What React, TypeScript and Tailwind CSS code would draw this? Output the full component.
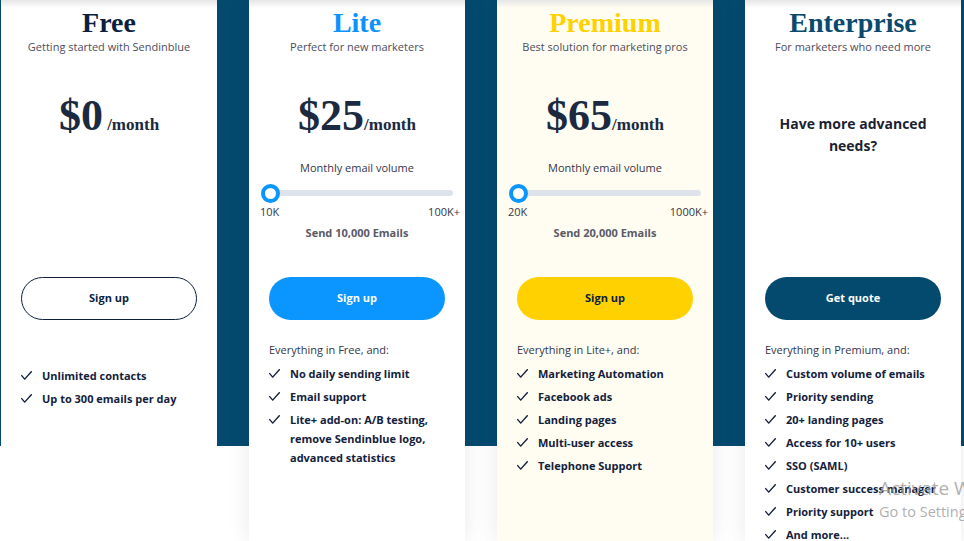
import React from "react";

type Plan = {
  title: string;
  titleColor: string;
  subtitle: string;
  price?: string;
  suffix?: string;
  bg: string;
  shadow: boolean;
  slider?: { min: string; max: string; send: string };
  ask?: boolean;
  button: { label: string; cls: string };
  intro?: string;
  features: string[];
};

const plans: Plan[] = [
  {
    title: "Free",
    titleColor: "text-[#0c1f3f]",
    subtitle: "Getting started with Sendinblue",
    price: "$0",
    suffix: "\u00a0/month",
    bg: "bg-white",
    shadow: false,
    button: {
      label: "Sign up",
      cls: "border border-[#0c1f3f] bg-white text-[#0c1f3f]",
    },
    features: ["Unlimited contacts", "Up to 300 emails per day"],
  },
  {
    title: "Lite",
    titleColor: "text-[#0b92ff]",
    subtitle: "Perfect for new marketers",
    price: "$25",
    suffix: "/month",
    bg: "bg-white",
    shadow: true,
    slider: { min: "10K", max: "100K+", send: "Send 10,000 Emails" },
    button: { label: "Sign up", cls: "bg-[#0b96ff] text-white" },
    intro: "Everything in Free, and:",
    features: [
      "No daily sending limit",
      "Email support",
      "Lite+ add-on: A/B testing, remove Sendinblue logo, advanced statistics",
    ],
  },
  {
    title: "Premium",
    titleColor: "text-[#ffd100]",
    subtitle: "Best solution for marketing pros",
    price: "$65",
    suffix: "/month",
    bg: "bg-[#fffdf1]",
    shadow: true,
    slider: { min: "20K", max: "1000K+", send: "Send 20,000 Emails" },
    button: { label: "Sign up", cls: "bg-[#ffd100] text-[#0c1f3f]" },
    intro: "Everything in Lite+, and:",
    features: [
      "Marketing Automation",
      "Facebook ads",
      "Landing pages",
      "Multi-user access",
      "Telephone Support",
    ],
  },
  {
    title: "Enterprise",
    titleColor: "text-[#0a4a6e]",
    subtitle: "For marketers who need more",
    bg: "bg-white",
    shadow: true,
    ask: true,
    button: { label: "Get quote", cls: "bg-[#044a6f] text-white" },
    intro: "Everything in Premium, and:",
    features: [
      "Custom volume of emails",
      "Priority sending",
      "20+ landing pages",
      "Access for 10+ users",
      "SSO (SAML)",
      "Customer success manager",
      "Priority support",
      "And more...",
    ],
  },
];

function Check() {
  return (
    <svg width="11" height="9" viewBox="0 0 11 9" className="shrink-0 mt-[5px]">
      <path
        d="M0.7 4.6 L3.7 8.1 L10.3 0.7"
        fill="none"
        stroke="#13213c"
        strokeWidth="1.4"
        strokeLinecap="round"
        strokeLinejoin="round"
      />
    </svg>
  );
}

function Card({ p }: { p: Plan }) {
  return (
    <div
      className={`relative w-[216px] shrink-0 h-[541px] ${p.bg} ${
        p.shadow ? "shadow-[0_0_22px_rgba(0,0,0,0.09)]" : ""
      } px-[20px] flex flex-col`}
    >
      <div className="absolute left-0 right-0 top-0 h-[8px] bg-gradient-to-b from-[#e6e6e6] to-transparent" />
      <div className="h-[277px] shrink-0 flex flex-col items-center">
        <div
          className={`pt-[7px] leading-[32px] text-[28px] font-bold ${p.titleColor}`}
          style={{ fontFamily: "'Liberation Serif', serif" }}
        >
          {p.title}
        </div>
        <div className="text-[11px] leading-[16px] text-[#4d4d5c] whitespace-nowrap">
          {p.subtitle}
        </div>
        {p.price && (
          <div
            className="mt-[40px] flex items-baseline font-bold leading-[42px]"
            style={{ fontFamily: "'Liberation Serif', serif" }}
          >
            <span className="text-[44px] text-[#1b2a40]">{p.price}</span>
            <span className="text-[17px] text-[#1b2a40]">{p.suffix}</span>
          </div>
        )}
        {p.ask && (
          <div className="mt-[58px] text-[14px] leading-[22px] font-bold text-[#1c1f33] text-center">
            Have more advanced
            <br />
            needs?
          </div>
        )}
        {p.slider && (
          <div className="w-full flex flex-col">
            <div className="mt-[14px] text-center text-[11px] leading-[16px] text-[#34364a]">
              Monthly email volume
            </div>
            <div className="mt-[7px] ml-[-9px] w-[200px] flex flex-col">
              <div className="relative h-[20px] flex items-center">
                <div className="ml-[1px] w-[192px] h-[6px] rounded-full bg-[#dee3eb]" />
                <div className="absolute left-[1px] top-[0.5px] w-[19px] h-[19px] rounded-full border-[4px] border-[#0b96ff] bg-white" />
              </div>
              <div className="mt-[1px] flex justify-between text-[11px] leading-[16px] text-[#333645]">
                <span>{p.slider.min}</span>
                <span className="whitespace-nowrap">{p.slider.max}</span>
              </div>
            </div>
            <div className="mt-[5px] text-center text-[11px] leading-[16px] font-bold text-[#585a66]">
              {p.slider.send}
            </div>
          </div>
        )}
      </div>
      <div
        className={`h-[43px] shrink-0 rounded-full flex items-center justify-center text-[11px] font-bold ${p.button.cls}`}
      >
        {p.button.label}
      </div>
      <div className="mt-[22px] h-[16px] shrink-0 text-[11px] leading-[16px] text-[#34364a] whitespace-nowrap">
        {p.intro ?? ""}
      </div>
      <div className={`${p.intro ? "mt-[6px]" : "mt-[8px]"} flex flex-col gap-[4px]`}>
        {p.features.map((f) => (
          <div key={f} className="flex items-start gap-[10px]">
            <Check />
            <span className="text-[11px] leading-[19px] font-bold text-[#13213c]">{f}</span>
          </div>
        ))}
      </div>
    </div>
  );
}

export default function App() {
  return (
    <div
      className="relative w-[964px] h-[541px] overflow-hidden bg-[linear-gradient(to_bottom,#044a6f_446px,#ffffff_446px)]"
      style={{ fontFamily: "'Open Sans', sans-serif" }}
    >
      <div className="flex gap-[32px] pl-[1px]">
        {plans.map((p) => (
          <Card key={p.title} p={p} />
        ))}
      </div>
      <div className="absolute left-[879px] top-[475px] pointer-events-none text-[#9a9a9a]/80 whitespace-nowrap">
        <div className="text-[19px] leading-[26px]">Activate Windows</div>
        <div className="text-[14.5px] leading-[20px] mt-[1px]">Go to Settings to activate Windows.</div>
      </div>
    </div>
  );
}
